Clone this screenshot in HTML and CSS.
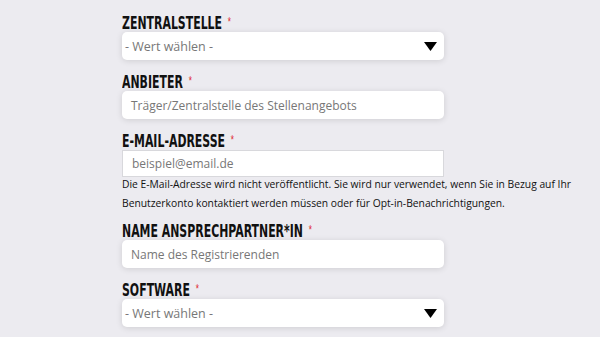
FILE: index.html
```html
<!DOCTYPE html>
<html lang="de">
<head>
<meta charset="utf-8">
<title>Formular</title>
<link rel="stylesheet" href="styles.css">
</head>
<body>
<form class="form">
  <div class="field">
    <div class="label"><span class="label-text">Zentralstelle <span class="req">*</span></span></div>
    <div class="box select"><span class="ph">- Wert wählen -</span><svg class="arrow" width="13" height="9" viewBox="0 0 13 9"><path d="M0 0H13L6.5 9Z" fill="#000"/></svg></div>
  </div>
  <div class="field">
    <div class="label"><span class="label-text">Anbieter <span class="req">*</span></span></div>
    <div class="box input"><span class="ph">Träger/Zentralstelle des Stellenangebots</span></div>
  </div>
  <div class="field">
    <div class="label"><span class="label-text">E-Mail-Adresse <span class="req">*</span></span></div>
    <div class="box input plain"><span class="ph">beispiel@email.de</span></div>
    <p class="help">Die E-Mail-Adresse wird nicht veröffentlicht. Sie wird nur verwendet, wenn Sie in Bezug auf Ihr Benutzerkonto kontaktiert werden müssen oder für Opt-in-Benachrichtigungen.</p>
  </div>
  <div class="field">
    <div class="label"><span class="label-text">Name Ansprechpartner*in <span class="req">*</span></span></div>
    <div class="box input"><span class="ph">Name des Registrierenden</span></div>
  </div>
  <div class="field">
    <div class="label"><span class="label-text">Software <span class="req">*</span></span></div>
    <div class="box select"><span class="ph">- Wert wählen -</span><svg class="arrow" width="13" height="9" viewBox="0 0 13 9"><path d="M0 0H13L6.5 9Z" fill="#000"/></svg></div>
  </div>
</form>
</body>
</html>
```
FILE: styles.css
```css
html, body {
  margin: 0;
  padding: 0;
  background: #ecebf0;
  height: 100%;
  overflow: hidden;
}
.form {
  width: 468px;
  padding: 14px 0 0 122px;
  display: flex;
  flex-direction: column;
  gap: 13px;
}
.field {
  display: flex;
  flex-direction: column;
}
.label {
  font-family: "DejaVu Sans Condensed", "DejaVu Sans", sans-serif;
  font-weight: 700;
  font-size: 18px;
  line-height: 18px;
  height: 18px;
  text-transform: uppercase;
  color: #111;
  white-space: nowrap;
}
.label-text {
  display: inline-block;
  transform: scaleX(0.675);
  transform-origin: 0 0;
}
.req {
  color: #e0262b;
  font-family: "Liberation Sans", sans-serif;
  font-weight: 400;
  font-size: 12px;
  vertical-align: top;
  margin-left: 3px;
  position: relative;
  top: -1px;
}
.box {
  width: 322px;
  height: 28px;
  box-sizing: border-box;
  background: #fff;
  border-radius: 5px;
  box-shadow: 0 1px 6px rgba(0, 0, 0, 0.13);
  display: flex;
  align-items: center;
  font-family: "Open Sans", sans-serif;
  font-size: 12px;
}
.select {
  padding: 0 7px 0 3px;
  justify-content: space-between;
  font-size: 12.5px;
}
.input {
  padding: 0 9px;
}
.plain {
  border-radius: 0;
  box-shadow: none;
  border: 1px solid #d8d8dc;
  height: 27px;
}
.ph {
  color: #777;
}
.help {
  margin: -2px 0 -4px 0;
  font-family: "Open Sans", sans-serif;
  font-size: 10.3px;
  line-height: 19px;
  color: #111;
}
```
